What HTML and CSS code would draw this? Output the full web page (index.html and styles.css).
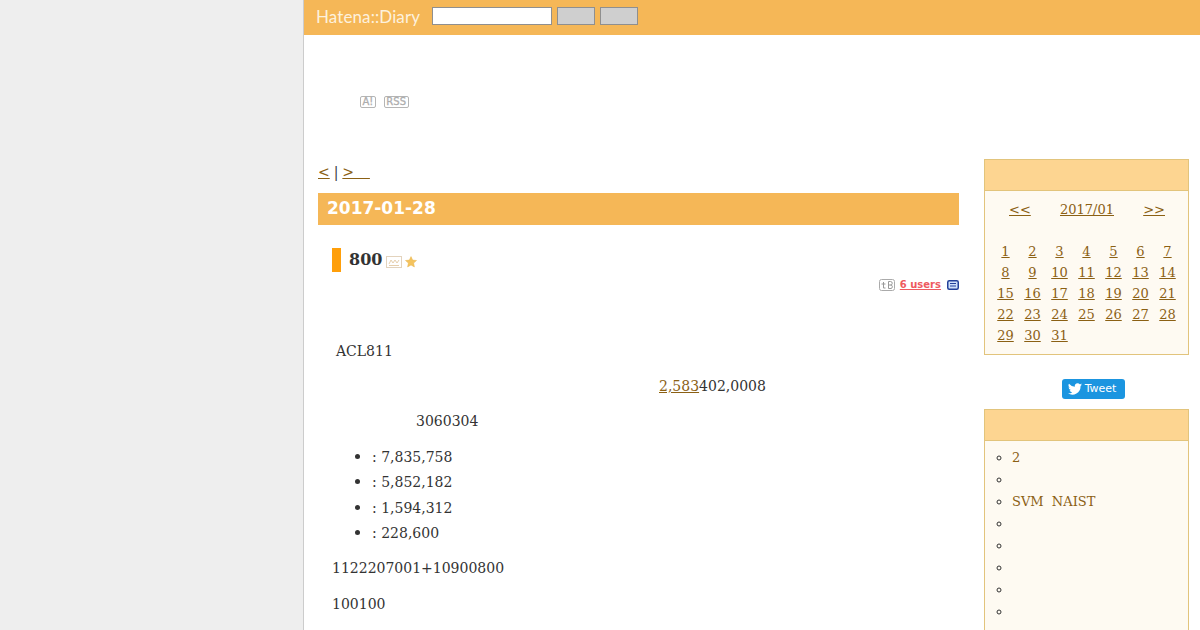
FILE: index.html
```html
<!DOCTYPE html>
<html lang="ja">
<head>
<meta charset="utf-8">
<title>Hatena::Diary</title>
<link rel="stylesheet" href="styles.css">
</head>
<body>
<div class="page">
  <header class="topbar">
    <span class="logo">Hatena::Diary</span>
    <input class="search" type="text">
    <button class="btn" type="button"></button>
    <button class="btn" type="button"></button>
  </header>
  <div class="banner">
    <span class="tiny">A!</span>
    <span class="tiny">RSS</span>
  </div>
  <div class="columns">
    <main class="main">
      <div class="pager"><a href="#">&lt;</a> | <a href="#">&gt;&nbsp;&nbsp;&nbsp;&nbsp;</a></div>
      <h2 class="date">2017-01-28</h2>
      <div class="section">
        <h3 class="title">
          <span class="mark"></span><span>800</span>
          <svg class="kw" width="16" height="12" viewBox="0 0 16 12"><rect x=".5" y=".5" width="15" height="11" fill="#fff" stroke="#e3d3bd"/><path d="M3 8l2-4 2 3 2-3 2 3 2-3M3 9.500h10" fill="none" stroke="#e6cfae"/></svg>
          <svg class="star" width="12" height="12" viewBox="0 0 12 12"><path d="M6 .6l1.600 3.500 3.900.4-2.900 2.600.8 3.800L6 9l-3.400 1.900.8-3.800L.5 4.500l3.900-.4z" fill="#f4c35e" stroke="#e8b44c" stroke-width=".5"/></svg>
        </h3>
        <div class="social">
          <svg width="16" height="12" viewBox="0 0 16 12"><rect x=".5" y=".5" width="15" height="11" rx="2" fill="#fff" stroke="#aaa"/><path d="M2.500 5h4M4.500 3v6h2M9.500 2.500v7h2.500a1.800 1.800 0 0 0 0-3.500h-2.500M9.500 2.500h2a1.700 1.700 0 0 1 0 3.500" fill="none" stroke="#999"/></svg>
          <a class="users" href="#">6 users</a>
          <svg class="note" width="12" height="10" viewBox="0 0 12 10"><rect x=".75" y=".75" width="10.500" height="8.500" rx="1.500" fill="#cfe0fb" stroke="#23409a" stroke-width="1.500"/><path d="M3 3.500h6M3 6h6" stroke="#23409a"/></svg>
        </div>
        <p class="p0">ACL811</p>
        <p class="p1"><a href="#">2,583</a>402,0008</p>
        <p class="p2">3060304</p>
        <ul class="stats">
          <li>: 7,835,758</li>
          <li>: 5,852,182</li>
          <li>: 1,594,312</li>
          <li>: 228,600</li>
        </ul>
        <p class="p3">1122207001+10900800</p>
        <p class="p3">100100</p>
      </div>
    </main>
    <aside class="side">
      <section class="box">
        <div class="box-head"></div>
        <div class="cal">
          <div class="cal-nav"><a href="#">&lt;&lt;</a><a href="#">2017/01</a><a href="#">&gt;&gt;</a></div>
          <div class="cal-grid">
            <a href="#">1</a><a href="#">2</a><a href="#">3</a><a href="#">4</a><a href="#">5</a><a href="#">6</a><a href="#">7</a>
            <a href="#">8</a><a href="#">9</a><a href="#">10</a><a href="#">11</a><a href="#">12</a><a href="#">13</a><a href="#">14</a>
            <a href="#">15</a><a href="#">16</a><a href="#">17</a><a href="#">18</a><a href="#">19</a><a href="#">20</a><a href="#">21</a>
            <a href="#">22</a><a href="#">23</a><a href="#">24</a><a href="#">25</a><a href="#">26</a><a href="#">27</a><a href="#">28</a>
            <a href="#">29</a><a href="#">30</a><a href="#">31</a>
          </div>
        </div>
      </section>
      <div class="tweet-row">
        <span class="tweet">
          <svg width="14" height="12" viewBox="0 0 24 20"><path d="M24 2.400a9.800 9.800 0 0 1-2.800.8A4.900 4.900 0 0 0 23.300.5a9.800 9.800 0 0 1-3.100 1.200 4.900 4.900 0 0 0-8.400 4.500A14 14 0 0 1 1.700 1a4.900 4.900 0 0 0 1.500 6.600 4.900 4.900 0 0 1-2.200-.6 4.900 4.900 0 0 0 3.900 4.900 4.900 4.900 0 0 1-2.200.1 4.900 4.900 0 0 0 4.600 3.400A9.900 9.900 0 0 1 0 17.400 14 14 0 0 0 21.500 5a10 10 0 0 0 2.500-2.600z" fill="#fff"/></svg>Tweet
        </span>
      </div>
      <section class="box">
        <div class="box-head"></div>
        <ul class="recent">
          <li><a href="#">2</a></li>
          <li></li>
          <li><a href="#">SVM&nbsp;&nbsp;NAIST</a></li>
          <li></li>
          <li></li>
          <li></li>
          <li></li>
          <li></li>
          <li></li>
        </ul>
      </section>
    </aside>
  </div>
</div>
</body>
</html>
```
FILE: styles.css
```css
html, body { margin: 0; padding: 0; height: 630px; overflow: hidden; }
body { background: #eee; font-family: "DejaVu Serif", serif; font-size: 14px; color: #333; }
a { color: #8b6014; }
.page { margin-left: 303px; width: 896px; height: 630px; overflow: hidden; background: #fff; border-left: 1px solid #ccc; }
.topbar { height: 35px; background: #f5b757; display: flex; align-items: center; padding-left: 12px; padding-bottom: 3px; box-sizing: border-box; }
.logo { font-family: Lato, sans-serif; font-size: 17px; letter-spacing: .1px; color: #fdf1dd; width: 116px; }
.search { width: 120px; height: 18px; box-sizing: border-box; border: 1px solid #8f8f8f; background: #fff; padding: 0; margin: 0 5px 0 0; border-radius: 0; }
.btn { width: 38px; height: 18px; box-sizing: border-box; border: 1px solid #8f8f8f; background: #cfcfcf; padding: 0; margin: 0 5px 0 0; border-radius: 0; }
.banner { height: 124px; box-sizing: border-box; padding: 61px 0 0 56px; display: flex; gap: 8px; align-items: flex-start; }
.tiny { font-family: "DejaVu Sans", sans-serif; font-size: 10px; line-height: 10px; height: 10px; padding: 0 1.500px; border: 1px solid #b5b5b5; border-radius: 2px; color: #b0b0b0; -webkit-text-stroke: .3px #aaa; }
.columns { display: flex; }
.main { width: 641px; margin-left: 14px; }
.pager { height: 34px; line-height: 26px; font-size: 14px; word-spacing: -.5px; }
.date { margin: 0; height: 32px; background: #f5b757; color: #fff; font: bold 17px/30px "DejaVu Sans", sans-serif; padding-left: 9px; }
.section { padding-left: 14px; }
.title { margin: 23px 0 0; height: 24px; display: flex; align-items: center; font-size: 16px; line-height: 24px; color: #333; }
.mark { width: 9px; height: 24px; background: #ff9f0a; margin-right: 8px; }
.kw { margin-left: 4px; margin-top: 3px; }
.star { margin-left: 3px; margin-top: 3px; }
.social { height: 14px; margin-top: 6px; display: flex; justify-content: flex-end; align-items: center; gap: 5px; }
.note { margin-left: 1px; }
.users { font: bold 10px/12px "DejaVu Sans", sans-serif; color: #ee5a60; text-decoration: underline; }
.p0 { margin: 48px 0 0 4px; line-height: 22px; }
.p1 { margin: 13px 0 0 327px; line-height: 22px; }
.p2 { margin: 13px 0 0 84px; line-height: 22px; }
.stats { margin: 12px 0 0; padding-left: 40px; }
.stats li { line-height: 25.300px; height: 25.300px; }
.stats li::marker { font-size: 16px; }
.p3 { margin: 10px 0 0; line-height: 25.500px; }
.stats + .p3 { margin-top: 11px; }
.side { width: 205px; margin-left: 25px; }
.box { border: 1px solid #e2c47c; background: #fefaf2; }
.box-head { height: 30px; background: #fdd591; border-bottom: 1px solid #e2c47c; }
.cal { height: 163px; box-sizing: border-box; padding-top: 8px; font-size: 13px; }
.cal-nav { display: flex; justify-content: space-between; padding: 0 23px 0 24px; line-height: 21px; }
.cal-grid { display: grid; grid-template-columns: repeat(7, 27px); justify-content: center; grid-auto-rows: 21px; line-height: 21px; text-align: center; margin-top: 21px; }
.tweet-row { height: 54px; display: flex; justify-content: center; align-items: flex-end; padding: 0 0 10px 14px; box-sizing: border-box; }
.tweet { height: 20px; width: 63px; box-sizing: border-box; background: #1b95e0; border-radius: 3px; color: #fff; font: 11px/20px "DejaVu Sans", sans-serif; display: flex; align-items: center; justify-content: center; gap: 3px; padding-right: 3px; }
.recent { margin: 0; padding: 5px 0 0 27px; list-style: circle; line-height: 22px; font-size: 13px; }
.recent li { height: 22px; }
.recent li::marker { font-size: 14px; }
.recent a { text-decoration: none; }
```
